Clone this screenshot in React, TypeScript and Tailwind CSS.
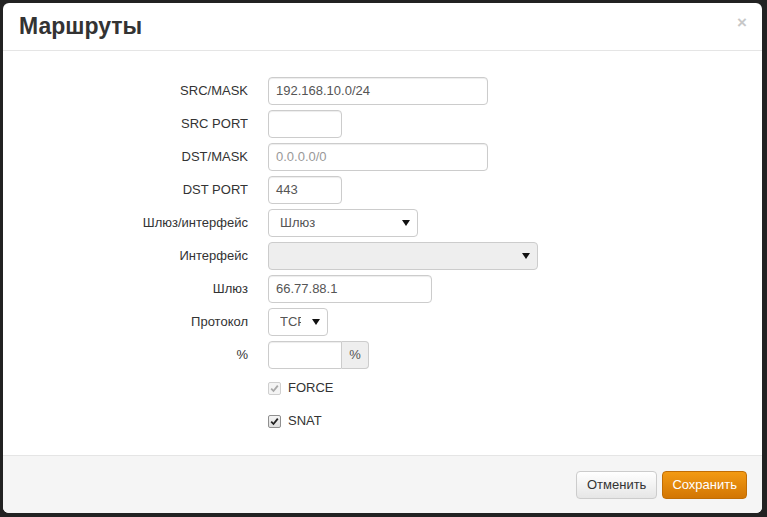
import React from "react";

const font = { fontFamily: '"Liberation Sans", Arial, sans-serif' };

function Check({ disabled }: { disabled?: boolean }) {
  return (
    <span
      className={`flex h-[13px] w-[13px] items-center justify-center rounded-[2px] border ${
        disabled ? "border-[#cfcfcf] bg-[#f4f4f4]" : "border-[#8f8f8f] bg-gradient-to-b from-[#f4f4f4] to-[#dedede]"
      }`}
    >
      <svg width="9" height="9" viewBox="0 0 9 9">
        <path
          d="M1.2 4.6 L3.5 7 L7.8 1.6"
          fill="none"
          stroke={disabled ? "#a8a8a8" : "#222"}
          strokeWidth="1.8"
        />
      </svg>
    </span>
  );
}

function Input({ w, value, placeholder }: { w: string; value?: string; placeholder?: string }) {
  return (
    <div
      className={`${w} flex h-[28px] items-center rounded-[4px] border border-[#cccccc] bg-white px-[7px] text-[13px] shadow-[inset_0_1px_1px_rgba(0,0,0,0.075)]`}
    >
      {value ? <span className="text-[#555]">{value}</span> : <span className="text-[#999]">{placeholder}</span>}
    </div>
  );
}

function Select({ w, value, disabled, textW }: { w: string; value?: string; disabled?: boolean; textW?: string }) {
  return (
    <div
      className={`${w} flex h-[28px] items-center justify-between rounded-[4px] border border-[#cccccc] pl-[11px] pr-[7px] text-[13px] text-[#555] ${
        disabled ? "bg-[#eeeeee]" : "bg-white"
      }`}
    >
      <span className={`${textW ?? ""} overflow-hidden whitespace-nowrap`}>{value}</span>
      <svg width="8" height="6" viewBox="0 0 8 6">
        <path d="M0 0 H8 L4 6 Z" fill="#111" />
      </svg>
    </div>
  );
}

const rows: { label: string; field: React.ReactNode }[] = [
  { label: "SRC/MASK", field: <Input w="w-[220px]" value="192.168.10.0/24" /> },
  { label: "SRC PORT", field: <Input w="w-[74px]" /> },
  { label: "DST/MASK", field: <Input w="w-[220px]" placeholder="0.0.0.0/0" /> },
  { label: "DST PORT", field: <Input w="w-[74px]" value="443" /> },
  { label: "Шлюз/интерфейс", field: <Select w="w-[150px]" value="Шлюз" /> },
  { label: "Интерфейс", field: <Select w="w-[270px]" disabled /> },
  { label: "Шлюз", field: <Input w="w-[164px]" value="66.77.88.1" /> },
  { label: "Протокол", field: <Select w="w-[60px]" value="TCP" textW="w-[21px]" /> },
  {
    label: "%",
    field: (
      <div className="flex h-[28px] text-[13px]">
        <div className="w-[74px] rounded-l-[4px] border border-[#cccccc] bg-white shadow-[inset_0_1px_1px_rgba(0,0,0,0.075)]" />
        <div className="flex w-[27px] items-center justify-center rounded-r-[4px] border border-l-0 border-[#cccccc] bg-[#eeeeee] text-[#555]">
          %
        </div>
      </div>
    ),
  },
];

export default function App() {
  return (
    <div className="h-[517px] w-[767px] bg-[#222222] p-[3px] pr-[5px] pb-[4px]" style={font}>
      <div className="flex h-full flex-col overflow-hidden rounded-[6px] bg-white">
        <header className="flex h-[48px] shrink-0 items-center justify-between border-b border-[#e5e5e5] pl-[16px] pr-[15px]">
          <h3 className="text-[23px] font-bold text-[#333]">Маршруты</h3>
          <span className="mb-[8px] text-[17px] font-bold leading-none text-[#c8c8c8]">×</span>
        </header>
        <main className="flex-1 pt-[26px]">
          <div className="grid grid-cols-[245px_1fr] gap-x-[20px] gap-y-[5px] text-[13px] text-[#333]">
            {rows.map((r) => (
              <React.Fragment key={r.label}>
                <div className="flex h-[28px] items-center justify-end">{r.label}</div>
                <div>{r.field}</div>
              </React.Fragment>
            ))}
            <div />
            <label className="flex h-[28px] items-center gap-[7px] text-[#333]">
              <Check disabled />
              FORCE
            </label>
            <div />
            <label className="flex h-[28px] items-center gap-[7px] text-[#333]">
              <Check />
              SNAT
            </label>
          </div>
        </main>
        <footer className="flex h-[58px] shrink-0 items-center justify-end gap-[5px] border-t border-[#e5e5e5] bg-[#f5f5f5] pr-[15px]">
          <button className="h-[28px] rounded-[4px] border border-[#cccccc] bg-gradient-to-b from-white to-[#e6e6e6] px-[10px] text-[13px] text-[#333]">
            Отменить
          </button>
          <button className="h-[28px] rounded-[4px] border border-[#c06d05] bg-gradient-to-b from-[#f39a13] to-[#d27604] px-[9px] text-[13px] text-white">
            Сохранить
          </button>
        </footer>
      </div>
    </div>
  );
}
